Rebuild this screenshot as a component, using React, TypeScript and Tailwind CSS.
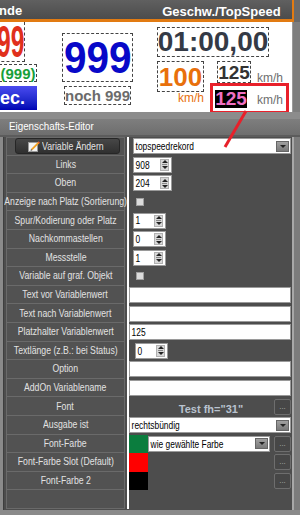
import React from "react";

const sans = "font-['Liberation_Sans',Arial,sans-serif]";

type Row = {
  label: string;
  kind:
    | "button"
    | "select"
    | "spin"
    | "check"
    | "text"
    | "font"
    | "color"
    | "empty";
  value?: string;
  width?: string;
  indent?: string;
  swatch?: string;
  select?: string;
};

const rows: Row[] = [
  { label: "Variable Ändern", kind: "button", value: "topspeedrekord" },
  { label: "Links", kind: "spin", value: "908", width: "w-[39px]", indent: "ml-[4px]" },
  { label: "Oben", kind: "spin", value: "204", width: "w-[39px]", indent: "ml-[4px]" },
  { label: "Anzeige nach Platz (Sortierung)", kind: "check" },
  { label: "Spur/Kodierung oder Platz", kind: "spin", value: "1", width: "w-[33px]", indent: "ml-[4px]" },
  { label: "Nachkommastellen", kind: "spin", value: "0", width: "w-[33px]", indent: "ml-[4px]" },
  { label: "Messstelle", kind: "spin", value: "1", width: "w-[33px]", indent: "ml-[4px]" },
  { label: "Variable auf graf. Objekt", kind: "check" },
  { label: "Text vor Variablenwert", kind: "text" },
  { label: "Text nach Variablenwert", kind: "text" },
  { label: "Platzhalter Variablenwert", kind: "text", value: "125" },
  { label: "Textlänge (z.B.: bei Status)", kind: "spin", value: "0", width: "w-[33px]", indent: "ml-[6px]" },
  { label: "Option", kind: "text" },
  { label: "AddOn Variablename", kind: "text" },
  { label: "Font", kind: "font", value: 'Test fh="31"' },
  { label: "Ausgabe ist", kind: "select", value: "rechtsbündig" },
  { label: "Font-Farbe", kind: "color", swatch: "bg-[#0b7d3e]", select: "wie gewählte Farbe" },
  { label: "Font-Farbe Slot (Default)", kind: "color", swatch: "bg-[#ff0000]" },
  { label: "Font-Farbe 2", kind: "color", swatch: "bg-[#000000]" },
  { label: "", kind: "empty" },
];

// small condensed UI text (Tahoma-like at a shrunk scale)
const InputText = ({ children }: { children?: React.ReactNode }) => (
  <span
    className={`${sans} inline-block whitespace-nowrap text-[10.5px] text-black pl-[2px] leading-none scale-x-[0.8] origin-left`}
  >
    {children}
  </span>
);

const LabelText = ({ children }: { children?: React.ReactNode }) => (
  <span
    className={`${sans} inline-block whitespace-nowrap text-[11px] text-[#e2e2e2] leading-none scale-x-[0.79] shrink-0`}
  >
    {children}
  </span>
);

const DropButton = () => (
  <div className="w-[13px] h-[11px] mr-[1px] bg-gradient-to-b from-[#a0a0a0] to-[#7a7a7a] border border-[#666] flex items-center justify-center">
    <div className="w-0 h-0 border-l-[3px] border-r-[3px] border-t-[3px] border-l-transparent border-r-transparent border-t-[#222]" />
  </div>
);

const Select = ({ value, className }: { value: string; className: string }) => (
  <div
    className={`${className} h-[16px] bg-white border border-[#9a9a9a] flex items-center justify-between overflow-hidden`}
  >
    <InputText>{value}</InputText>
    <DropButton />
  </div>
);

const Spin = ({ value, width, indent }: { value: string; width?: string; indent?: string }) => (
  <div
    className={`${width} ${indent} h-[16px] bg-white border border-[#9a9a9a] flex items-center justify-between`}
  >
    <InputText>{value}</InputText>
    <div className="w-[9px] h-[12px] mr-[2px] bg-[#d8d8d8] border border-[#b0b0b0] flex flex-col items-center justify-center gap-[1px]">
      <div className="w-0 h-0 border-l-[3px] border-r-[3px] border-b-[3px] border-l-transparent border-r-transparent border-b-[#222]" />
      <div className="w-[5px] h-px bg-[#888]" />
      <div className="w-0 h-0 border-l-[3px] border-r-[3px] border-t-[3px] border-l-transparent border-r-transparent border-t-[#222]" />
    </div>
  </div>
);

const Dots = () => (
  <div className="w-[17px] h-[16px] ml-auto mr-[1px] rounded-[2px] bg-[#474747] border border-[#6e6e6e] flex items-end justify-center pb-[3px]">
    <span className={`${sans} text-[8px] leading-none text-[#b0b0b0]`}>...</span>
  </div>
);

const Pencil = () => (
  <svg width="12" height="12" viewBox="0 0 12 12" className="mr-[2px] shrink-0">
    <rect x="0.5" y="2.5" width="9" height="9" fill="#f4f4f4" stroke="#9a9a9a" />
    <path d="M3 9 L10.5 1.5 L11.8 2.8 L4.3 10.3 Z" fill="#f2a020" />
    <path d="M10.5 1.5 L11.8 2.8 L11.2 3.4 L9.9 2.1 Z" fill="#e03030" />
    <path d="M3 9 L4.3 10.3 L2.6 10.7 Z" fill="#333" />
  </svg>
);

const RightCell = ({ row }: { row: Row }) => {
  switch (row.kind) {
    case "button":
      return <Select value={row.value!} className="ml-[4px] flex-1 mr-[1px]" />;
    case "select":
      return <Select value={row.value!} className="flex-1 mr-[1px]" />;
    case "spin":
      return <Spin value={row.value!} width={row.width} indent={row.indent} />;
    case "check":
      return (
        <div className="ml-[7px] w-[8px] h-[8px] bg-[#dcdcdc] border border-[#a0a0a0]" />
      );
    case "text":
      return (
        <div className="flex-1 mr-[1px] h-[16px] bg-white border border-[#9a9a9a] flex items-center">
          <InputText>{row.value}</InputText>
        </div>
      );
    case "font":
      return (
        <>
          <div className="flex-1 pl-[19px] text-center">
            <span className={`${sans} text-[11px] font-bold text-[#b9c3cf] leading-none`}>
              {row.value}
            </span>
          </div>
          <Dots />
        </>
      );
    case "color":
      return (
        <>
          <div className={`${row.swatch} w-[19px] h-full`} />
          {row.select && <Select value={row.select} className="w-[122px]" />}
          <Dots />
        </>
      );
    default:
      return null;
  }
};

const Display = () => (
  <div className="relative w-[292px] h-[90px] bg-white overflow-hidden">
    {/* red place */}
    <div className="absolute left-[-40px] top-0 w-[65px] h-[40px] border border-t-0 border-dashed border-[#444] flex items-end justify-end overflow-hidden">
      <span className={`${sans} text-[44px] font-bold leading-[36px] text-[#e0301c] scale-x-[0.56] origin-right mb-[1px]`}>
        999
      </span>
    </div>
    <div className="absolute left-[-1px] top-[42px] w-[38px] h-[18px] border border-dashed border-[#444] flex items-center justify-center">
      <span className={`${sans} text-[15px] font-bold leading-none text-[#17a03a] whitespace-nowrap`}>(999)</span>
    </div>
    <div className="absolute left-0 top-[64px] w-[37px] h-[24px] bg-gradient-to-b from-[#4a4af0] to-[#0000b4] flex items-center">
      <span className={`${sans} text-[18px] font-bold leading-none text-white`}>ec.</span>
    </div>
    {/* center */}
    <div className="absolute left-[62px] top-[11px] w-[71px] h-[49px] border border-dashed border-[#444] flex items-center justify-center">
      <span className={`${sans} inline-block text-[44px] font-bold leading-none text-[#0808c8] scale-x-[0.92] whitespace-nowrap`}>
        999
      </span>
    </div>
    <div className="absolute left-[64px] top-[64px] w-[67px] h-[19px] border border-dashed border-[#444] flex items-center justify-center">
      <span className={`${sans} text-[15px] font-bold leading-none text-[#6b6b6b] whitespace-nowrap`}>noch 999</span>
    </div>
    {/* right */}
    <div className="absolute left-[157px] top-[5px] w-[112px] h-[30px] border border-dashed border-[#444] flex items-center justify-center">
      <span className={`${sans} text-[28px] font-bold leading-none text-[#343a46] whitespace-nowrap`}>01:00,00</span>
    </div>
    <div className="absolute left-[157px] top-[39px] w-[47px] h-[31px] border border-dashed border-[#444] flex items-center justify-center">
      <span className={`${sans} text-[26px] font-bold leading-none text-[#e8700c]`}>100</span>
    </div>
    <span className={`${sans} absolute left-[178px] top-[70px] text-[12px] leading-none text-[#e8700c]`}>
      km/h
    </span>
    <div className="absolute left-[217px] top-[39px] w-[34px] h-[22px] border border-dashed border-[#444] flex items-center justify-center">
      <span className={`${sans} text-[19px] font-bold leading-none text-[#333]`}>125</span>
    </div>
    <span className={`${sans} absolute left-[257px] top-[50px] text-[12px] leading-none text-[#6e6e6e]`}>
      km/h
    </span>
    <div className="absolute left-[210px] top-[61px] w-[79px] h-[31px] border-[3px] border-[#e8202a] flex items-center">
      <div className="ml-[2px] w-[32px] h-[18px] bg-black flex items-center justify-center">
        <span className={`${sans} text-[19px] font-bold leading-none text-[#f070c4]`}>125</span>
      </div>
      <span className={`${sans} ml-[10px] mt-[3px] text-[12px] leading-none text-[#6e6e6e]`}>km/h</span>
    </div>
  </div>
);

export default function App() {
  return (
    <div className="relative w-[300px] h-[515px] overflow-hidden bg-[#8a8a8a]">
      {/* top header */}
      <div className="flex h-[19px] bg-gradient-to-b from-[#606060] to-[#4c4c4c]">
        <span className={`${sans} text-[13px] font-bold text-white leading-none mt-[4px] ml-[-1px]`}>
          nde
        </span>
        <span className={`${sans} text-[13px] font-bold text-white leading-none mt-[5px] ml-[140px] whitespace-nowrap`}>
          Geschw./TopSpeed
        </span>
        <div className="ml-auto w-[2px] bg-[#e27b12]" />
        <div className="w-[6px] bg-[#6a6a6a]" />
      </div>
      <div className="flex">
        <div className="w-[294px] h-[3px] bg-[#e27b12]" />
        <div className="w-[6px] h-[3px] bg-[#6a6a6a]" />
      </div>
      <div className="flex">
        <Display />
        <div className="flex-1 bg-[#7e7e7e] border-l border-[#9a9a9a]" />
      </div>

      {/* editor header */}
      <div className="h-[7px] bg-[#8c8c8c]" />
      <div className="h-[16px] bg-gradient-to-b from-[#7e7e7e] to-[#6e6e6e] flex items-center">
        <span className={`${sans} inline-block text-[11.5px] text-white ml-[9px] leading-none scale-x-[0.85] origin-left whitespace-nowrap`}>
          Eigenschafts-Editor
        </span>
      </div>
      <div className="h-[2px] bg-[#5c5c5c]" />

      {/* editor rows */}
      <div className="flex h-[373px]">
        <div className="w-[4px] bg-[#8a8a8a] border-r border-[#3e3e3e]" />
        <div className="flex-1 bg-[#4d4d4d]">
          {rows.map((row, i) => (
            <div key={i} className="flex h-[18.6px]">
              <div
                className={`ml-[2px] w-[119px] border-x border-b border-[#6a6a6a] bg-[#525252] flex items-center justify-center ${
                  i === 0 ? "border-t bg-[#474747]" : ""
                }`}
              >
                {row.kind === "button" ? (
                  <div className="w-[105px] h-[16px] ml-[3px] rounded-[3px] border border-[#262626] bg-gradient-to-b from-[#474747] to-[#303030] flex items-center justify-center">
                    <Pencil />
                    <span className={`${sans} inline-block whitespace-nowrap text-[11px] text-[#e4e4e4] leading-none scale-x-[0.79] origin-left -mr-[14px]`}>
                      {row.label}
                    </span>
                  </div>
                ) : (
                  <LabelText>{row.label}</LabelText>
                )}
              </div>
              <div className="ml-[2px] w-[2px] bg-white" />
              <div className="flex-1 flex items-center">
                <RightCell row={row} />
              </div>
            </div>
          ))}
        </div>
        <div className="w-[8px] bg-[#7c7c7c] border-l-2 border-[#a8a8a8]" />
      </div>

      {/* pointer line */}
      <svg className="absolute left-0 top-0 pointer-events-none" width="300" height="515">
        <line x1="246" y1="111" x2="225" y2="147" stroke="#e8202a" strokeWidth="3" />
      </svg>
    </div>
  );
}
